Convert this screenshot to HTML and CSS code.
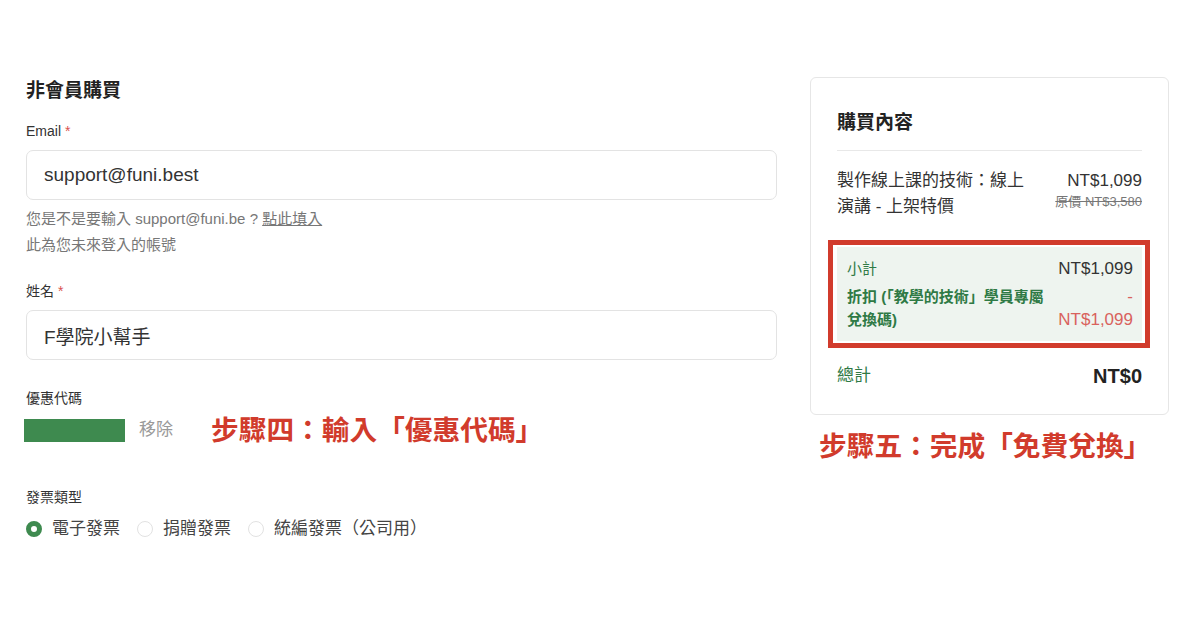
FILE: index.html
```html
<!DOCTYPE html>
<html lang="zh-Hant">
<head>
<meta charset="utf-8">
<title>非會員購買</title>
<link rel="stylesheet" href="styles.css">
</head>
<body>
<div class="page">
  <main class="form">
    <h1 class="title">非會員購買</h1>

    <label class="label label-email">Email <span class="req">*</span></label>
    <input class="field" type="text" value="support@funi.best">
    <p class="hint hint-first">您是不是要輸入 support@funi.be ? <a class="fill-link" href="#">點此填入</a></p>
    <p class="hint hint-second">此為您未來登入的帳號</p>

    <label class="label label-name">姓名 <span class="req">*</span></label>
    <input class="field" type="text" value="F學院小幫手">

    <label class="label label-coupon">優惠代碼</label>
    <div class="coupon-row">
      <span class="coupon-chip"></span>
      <span class="coupon-remove">移除</span>
      <span class="step step-four">步驟四：輸入「優惠代碼」</span>
    </div>

    <label class="label label-invoice">發票類型</label>
    <div class="radios">
      <span class="radio"><span class="dot dot-on"></span>電子發票</span>
      <span class="radio"><span class="dot"></span>捐贈發票</span>
      <span class="radio"><span class="dot"></span>統編發票（公司用）</span>
    </div>
  </main>

  <aside class="side">
    <section class="card">
      <h2 class="card-title">購買內容</h2>
      <div class="item">
        <div class="item-name">製作線上課的技術：線上演講 - 上架特價</div>
        <div class="item-price">
          <div class="price-now">NT$1,099</div>
          <div class="price-old">原價 NT$3,580</div>
        </div>
      </div>
      <div class="summary">
        <div class="sum-row">
          <span class="sum-label">小計</span>
          <span class="sum-value">NT$1,099</span>
        </div>
        <div class="sum-row discount">
          <span class="sum-label disc-label">折扣 (「教學的技術」學員專屬兌換碼)</span>
          <span class="disc-value">-<br>NT$1,099</span>
        </div>
      </div>
      <div class="total-row">
        <span class="total-label">總計</span>
        <span class="total-value">NT$0</span>
      </div>
    </section>
    <div class="step step-five">步驟五：完成「免費兌換」</div>
  </aside>
</div>
</body>
</html>
```

FILE: styles.css
```css
* { box-sizing: border-box; }

html, body {
  margin: 0;
  background: #ffffff;
}

body {
  font-family: "Liberation Sans", "Noto Sans CJK TC", sans-serif;
  color: #333333;
}

.page {
  display: flex;
  gap: 33px;
  padding: 77px 31px 0 26px;
}

/* ---------- left form ---------- */
.form {
  width: 751px;
  display: flex;
  flex-direction: column;
  align-items: flex-start;
}

.title {
  margin: 1px 0 0;
  font-size: 19px;
  line-height: 26px;
  font-weight: 700;
  color: #222222;
}

.label {
  display: block;
  font-size: 14px;
  line-height: 20px;
  color: #333333;
}

.req { color: #d9534f; }

.label-email { margin-top: 17px; }
.label-name { margin-top: 25px; }
.label-coupon { margin-top: 28px; }
.label-invoice { margin-top: 45px; }

.field {
  display: block;
  width: 100%;
  height: 50px;
  margin-top: 9px;
  padding: 0 17px;
  border: 1px solid #e3e3e3;
  border-radius: 7px;
  background: #ffffff;
  font-family: "Liberation Sans", "Noto Sans CJK TC", sans-serif;
  font-size: 19px;
  color: #333333;
  outline: none;
}

.hint {
  margin: 0;
  font-size: 15px;
  line-height: 22px;
  color: #777777;
}

.hint-first { margin-top: 8px; }
.hint-second { margin-top: 4px; }

.fill-link {
  color: #777777;
  text-decoration: underline;
}

.coupon-row {
  display: flex;
  align-items: center;
  height: 24px;
  margin-top: 10px;
  margin-left: -2px;
}

.coupon-chip {
  width: 101px;
  height: 23px;
  background: #3e8a4f;
}

.coupon-remove {
  margin-left: 14px;
  font-size: 17px;
  line-height: 24px;
  color: #9a9a9a;
}

.step {
  font-size: 27.7px;
  line-height: 34px;
  font-weight: 700;
  color: #d13b2c;
  white-space: nowrap;
}

.step-four {
  margin-left: 38px;
  margin-top: 1px;
}

.radios {
  display: flex;
  align-items: center;
  gap: 17px;
  margin-top: 11px;
  height: 22px;
}

.radio {
  display: flex;
  align-items: center;
  gap: 10px;
  font-size: 17px;
  line-height: 22px;
  color: #444444;
}

.dot {
  width: 16px;
  height: 16px;
  border-radius: 50%;
  border: 1px solid #e2e2e2;
  background: #ffffff;
}

.dot-on {
  border: 5px solid #3e8a4f;
}

/* ---------- right summary ---------- */
.side {
  width: 359px;
  display: flex;
  flex-direction: column;
}

.card {
  border: 1px solid #e6e6e6;
  border-radius: 6px;
  padding: 32px 26px 24px;
  background: #ffffff;
}

.card-title {
  margin: 0;
  padding-bottom: 14px;
  border-bottom: 1px solid #e8e8e8;
  font-size: 19px;
  line-height: 26px;
  font-weight: 700;
  color: #222222;
}

.item {
  display: flex;
  justify-content: space-between;
  gap: 20px;
  margin-top: 17px;
}

.item-name {
  width: 195px;
  font-size: 17px;
  line-height: 26px;
  color: #333333;
}

.item-price {
  text-align: right;
}

.price-now {
  font-size: 17px;
  line-height: 26px;
  color: #333333;
}

.price-old {
  font-size: 13px;
  line-height: 16px;
  color: #777777;
  text-decoration: line-through;
}

.summary {
  position: relative;
  margin-top: 27px;
  padding: 10px 9px 10px 10px;
  background: #eef4ef;
}

.summary::after {
  content: "";
  position: absolute;
  top: -7px;
  left: -9px;
  right: -8px;
  bottom: -7px;
  border: 5px solid #d13b2c;
  pointer-events: none;
}

.sum-row {
  display: flex;
  justify-content: space-between;
  align-items: flex-start;
}

.sum-label {
  font-size: 15px;
  line-height: 24px;
  color: #2f7a45;
}

.sum-value {
  font-size: 17px;
  line-height: 24px;
  color: #333333;
}

.discount {
  margin-top: 4px;
}

.disc-label {
  width: 212px;
  font-weight: 700;
  font-size: 15px;
  line-height: 23px;
}

.disc-value {
  text-align: right;
  font-size: 17px;
  line-height: 23px;
  color: #d9625d;
}

.total-row {
  display: flex;
  justify-content: space-between;
  align-items: center;
  margin-top: 21px;
  height: 28px;
}

.total-label {
  font-size: 17px;
  line-height: 28px;
  color: #2f7a45;
}

.total-value {
  font-size: 20px;
  line-height: 28px;
  font-weight: 700;
  color: #222222;
}

.step-five {
  margin-top: 15px;
  margin-left: 9px;
}
```
